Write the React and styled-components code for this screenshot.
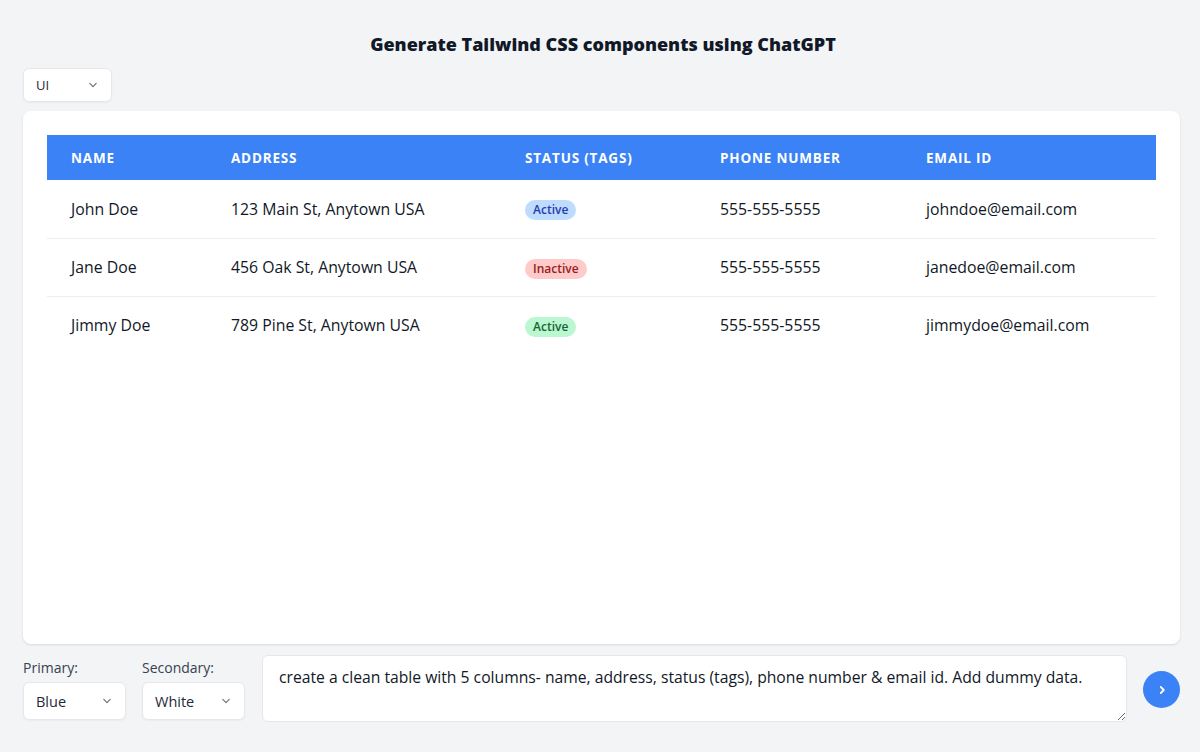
import React from "react";
import styled, { createGlobalStyle } from "styled-components";

const GlobalStyle = createGlobalStyle`
  html, body {
    margin: 0;
    padding: 0;
    background: #f3f4f6;
    font-family: "Open Sans", "Liberation Sans", sans-serif;
    color: #111827;
  }
  * { box-sizing: border-box; }
`;

const rows = [
  { name: "John Doe", address: "123 Main St, Anytown USA", status: "Active", tone: "blue", phone: "555-555-5555", email: "johndoe@email.com" },
  { name: "Jane Doe", address: "456 Oak St, Anytown USA", status: "Inactive", tone: "red", phone: "555-555-5555", email: "janedoe@email.com" },
  { name: "Jimmy Doe", address: "789 Pine St, Anytown USA", status: "Active", tone: "green", phone: "555-555-5555", email: "jimmydoe@email.com" },
];

const tones = {
  blue: { bg: "#bfdbfe", fg: "#1e40af" },
  red: { bg: "#fecaca", fg: "#991b1b" },
  green: { bg: "#bbf7d0", fg: "#166534" },
};

const Page = styled.div`
  width: 1200px;
  height: 752px;
  padding: 30px 20px 0 23px;
  display: flex;
  flex-direction: column;
`;

const Title = styled.h1`
  margin: 0;
  text-align: center;
  font-size: 18px;
  font-weight: 800;
  line-height: 28px;
  color: #111827;
  padding-left: 3px;
`;

const SelectBox = styled.div`
  width: ${(p) => p.$w}px;
  height: ${(p) => p.$h}px;
  background: #fff;
  border: 1px solid #e5e7eb;
  border-radius: 6px;
  display: flex;
  align-items: center;
  justify-content: space-between;
  padding: 0 10px 0 12px;
  font-size: ${(p) => p.$fs}px;
  color: #1f2937;
  box-shadow: 0 1px 2px rgba(0, 0, 0, 0.04);
`;

const Chevron = () => (
  <svg width="16" height="16" viewBox="0 0 20 20" fill="none" stroke="#6b7280" strokeWidth="1.5" strokeLinecap="round" strokeLinejoin="round">
    <path d="M6 8l4 4 4-4" />
  </svg>
);

const TopRow = styled.div`
  margin-top: 10px;
  margin-bottom: 9px;
`;

const Card = styled.div`
  width: 1157px;
  height: 533px;
  background: #fff;
  border-radius: 8px;
  box-shadow: 0 1px 3px rgba(0, 0, 0, 0.08), 0 1px 2px rgba(0, 0, 0, 0.04);
  padding: 24px 24px;
`;

const Table = styled.table`
  width: 100%;
  border-collapse: collapse;
`;

const Th = styled.th`
  background: #3b82f6;
  color: #fff;
  text-align: left;
  font-size: 13.5px;
  font-weight: 700;
  letter-spacing: 0.06em;
  text-transform: uppercase;
  height: 45px;
  padding: 0 0 0 24px;
  width: ${(p) => p.$w}px;
`;

const Tr = styled.tr`
  border-bottom: ${(p) => (p.$last ? "none" : "1px solid #eceef1")};
`;

const Td = styled.td`
  height: 58px;
  padding: 0 0 0 24px;
  font-size: 15.8px;
  color: #111827;
  vertical-align: middle;
`;

const Badge = styled.span`
  display: inline-block;
  padding: 0 8px;
  height: 20px;
  line-height: 20px;
  border-radius: 10px;
  font-size: 12px;
  font-weight: 600;
  background: ${(p) => tones[p.$tone].bg};
  color: ${(p) => tones[p.$tone].fg};
`;

const Bottom = styled.div`
  margin-top: 11px;
  display: flex;
  align-items: flex-start;
`;

const Field = styled.div`
  display: flex;
  flex-direction: column;
  gap: 5px;
  margin-right: 16px;
  padding-top: 3px;
`;

const Label = styled.label`
  font-size: 14px;
  color: #374151;
  line-height: 19px;
`;

const Prompt = styled.textarea`
  width: 866px;
  height: 67px;
  resize: vertical;
  border: 1px solid #e5e7eb;
  border-radius: 6px;
  background: #fff;
  padding: 10px 16px;
  font-family: inherit;
  font-size: 15.7px;
  line-height: 22px;
  color: #111827;
  outline: none;
  margin-left: 1px;
`;

const SendButton = styled.button`
  width: 37px;
  height: 37px;
  border-radius: 50%;
  border: none;
  background: #3b82f6;
  margin: 16px 0 0 16px;
  display: flex;
  align-items: center;
  justify-content: center;
  padding: 0;
`;

export default function App() {
  return (
    <Page>
      <GlobalStyle />
      <Title>Generate Tailwind CSS components using ChatGPT</Title>
      <TopRow>
        <SelectBox $w={89} $h={34} $fs={13}>
          UI
          <Chevron />
        </SelectBox>
      </TopRow>
      <Card>
        <Table>
          <thead>
            <tr>
              <Th $w={160}>Name</Th>
              <Th $w={294}>Address</Th>
              <Th $w={195}>Status (Tags)</Th>
              <Th $w={206}>Phone Number</Th>
              <Th>Email ID</Th>
            </tr>
          </thead>
          <tbody>
            {rows.map((r, i) => (
              <Tr key={r.name} $last={i === rows.length - 1}>
                <Td>{r.name}</Td>
                <Td>{r.address}</Td>
                <Td>
                  <Badge $tone={r.tone}>{r.status}</Badge>
                </Td>
                <Td>{r.phone}</Td>
                <Td>{r.email}</Td>
              </Tr>
            ))}
          </tbody>
        </Table>
      </Card>
      <Bottom>
        <Field>
          <Label>Primary:</Label>
          <SelectBox $w={103} $h={38} $fs={14.5}>
            Blue
            <Chevron />
          </SelectBox>
        </Field>
        <Field>
          <Label>Secondary:</Label>
          <SelectBox $w={103} $h={38} $fs={14.5}>
            White
            <Chevron />
          </SelectBox>
        </Field>
        <Prompt defaultValue="create a clean table with 5 columns- name, address, status (tags), phone number & email id. Add dummy data." />
        <SendButton>
          <svg width="12" height="12" viewBox="0 0 20 20" fill="none" stroke="#fff" strokeWidth="3" strokeLinecap="round" strokeLinejoin="round">
            <path d="M8 5l5 5-5 5" />
          </svg>
        </SendButton>
      </Bottom>
    </Page>
  );
}
